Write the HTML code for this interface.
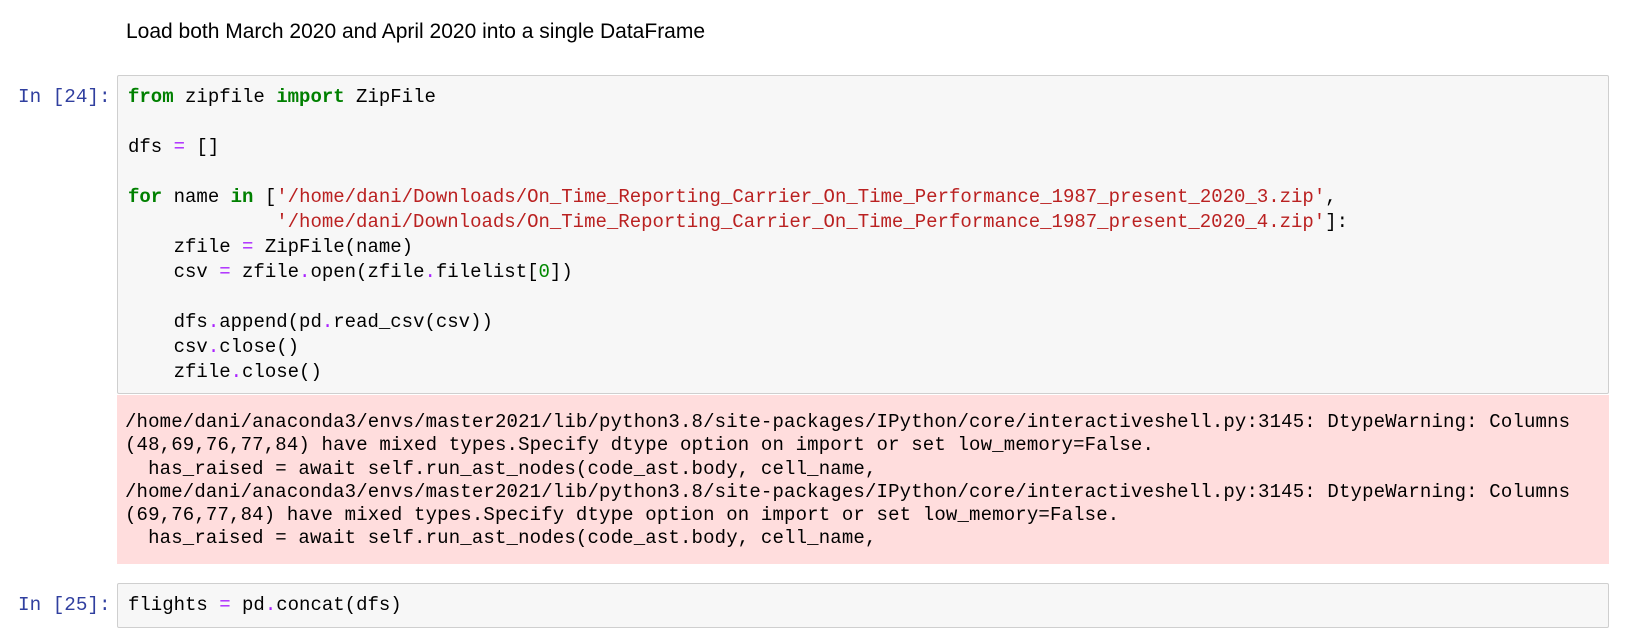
<!DOCTYPE html>
<html><head><meta charset="utf-8"><style>
body{margin:0;width:1628px;height:638px;background:#fff;overflow:hidden;position:relative;font-family:"Liberation Mono",monospace;}
.md{position:absolute;left:126px;top:20px;font-family:"Liberation Sans",Arial,sans-serif;font-size:21px;color:#000;}
.prompt{position:absolute;left:18px;color:#303F9F;font-size:19.3px;line-height:25px;}
.box{position:absolute;left:117px;width:1490px;background:#f7f7f7;border:1px solid #cfcfcf;border-radius:2px;}
pre{margin:0;font-family:"Liberation Mono",monospace;font-size:19px;line-height:25px;color:#000;white-space:pre;}
.k{color:#008000;font-weight:bold}.s{color:#BA2121}.o{color:#AA22FF}.n{color:#008800}
.err{position:absolute;left:117px;top:395px;width:1492px;height:169px;background:#fdd;}
.err pre{letter-spacing:0.16px;line-height:23.3px;}
</style></head><body>
<div class="md">Load both March 2020 and April 2020 into a single DataFrame</div>
<div class="prompt" style="top:85px">In [24]:</div>
<div class="box" style="top:75px;height:317px"><pre style="padding:9px 0 0 10px"><span class="k">from</span> zipfile <span class="k">import</span> ZipFile

dfs <span class="o">=</span> []

<span class="k">for</span> name <span class="k">in</span> [<span class="s">'/home/dani/Downloads/On_Time_Reporting_Carrier_On_Time_Performance_1987_present_2020_3.zip'</span>,
             <span class="s">'/home/dani/Downloads/On_Time_Reporting_Carrier_On_Time_Performance_1987_present_2020_4.zip'</span>]:
    zfile <span class="o">=</span> ZipFile(name)
    csv <span class="o">=</span> zfile<span class="o">.</span>open(zfile<span class="o">.</span>filelist[<span class="n">0</span>])

    dfs<span class="o">.</span>append(pd<span class="o">.</span>read_csv(csv))
    csv<span class="o">.</span>close()
    zfile<span class="o">.</span>close()</pre></div>
<div class="err"><pre style="padding:16px 0 0 8px">/home/dani/anaconda3/envs/master2021/lib/python3.8/site-packages/IPython/core/interactiveshell.py:3145: DtypeWarning: Columns
(48,69,76,77,84) have mixed types.Specify dtype option on import or set low_memory=False.
  has_raised = await self.run_ast_nodes(code_ast.body, cell_name,
/home/dani/anaconda3/envs/master2021/lib/python3.8/site-packages/IPython/core/interactiveshell.py:3145: DtypeWarning: Columns
(69,76,77,84) have mixed types.Specify dtype option on import or set low_memory=False.
  has_raised = await self.run_ast_nodes(code_ast.body, cell_name,</pre></div>
<div class="prompt" style="top:593px">In [25]:</div>
<div class="box" style="top:583px;height:43px"><pre style="padding:9px 0 0 10px">flights <span class="o">=</span> pd<span class="o">.</span>concat(dfs)</pre></div>
</body></html>
